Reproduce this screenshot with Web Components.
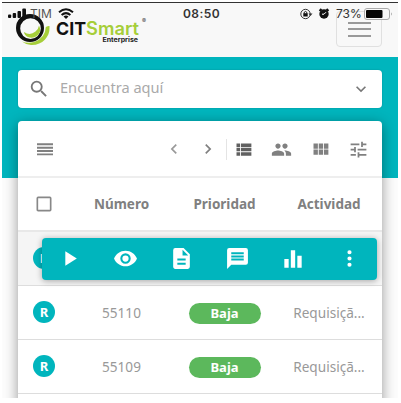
<!DOCTYPE html>
<html lang="es">
<head>
<meta charset="utf-8">
<title>CITSmart</title>
<style>
html,body{margin:0;background:#fff}
body{width:401px;height:403px;overflow:hidden;font-family:"Noto Sans","Open Sans",sans-serif}
</style>
</head>
<body>
<cit-app></cit-app>
<script>
const define = (name, css, html) => customElements.define(name, class extends HTMLElement {
  constructor() {
    super();
    const t = document.createElement('template');
    t.innerHTML = `<style>*{box-sizing:border-box}${css}</style>${typeof html === 'function' ? html(this) : html}`;
    this.attachShadow({ mode: 'open' }).append(t.content.cloneNode(true));
  }
});

const icons = {
  search: 'M15.500 14h-.79l-.28-.27A6.470 6.470 0 0 0 16 9.500 6.500 6.500 0 1 0 9.500 16c1.610 0 3.090-.59 4.230-1.570l.27.28v.79l5 4.990L20.490 19l-4.990-5zm-6 0C7.010 14 5 11.990 5 9.500S7.010 5 9.500 5 14 7.010 14 9.500 11.990 14 9.500 14z',
  expand: 'M16.590 8.590L12 13.170 7.410 8.590 6 10l6 6 6-6z',
  lines: 'M4 6.300h16v2H4zM4 9.700h16v2H4zM4 13.100h16v2H4zM4 16.500h16v1.800H4z',
  left: 'M15.410 7.410L14 6l-6 6 6 6 1.410-1.410L10.830 12z',
  right: 'M10 6L8.590 7.410 13.170 12l-4.580 4.590L10 18l6-6z',
  list: 'M4 14h4v-4H4v4zm0 5h4v-4H4v4zM4 9h4V5H4v4zm5 5h12v-4H9v4zm0 5h12v-4H9v4zM9 5v4h12V5H9z',
  group: 'M16 11c1.660 0 2.990-1.340 2.990-3S17.660 5 16 5s-3 1.340-3 3 1.340 3 3 3zm-8 0c1.660 0 2.990-1.340 2.990-3S9.660 5 8 5 5 6.340 5 8s1.340 3 3 3zm0 2c-2.330 0-7 1.170-7 3.500V19h14v-2.500c0-2.330-4.670-3.500-7-3.500zm8 0c-.29 0-.62.02-.97.05 1.160.84 1.970 1.970 1.970 3.450V19h6v-2.500c0-2.330-4.670-3.500-7-3.500z',
  grid: 'M4 11h5V5H4v6zm0 7h5v-6H4v6zm6 0h5v-6h-5v6zm6 0h5v-6h-5v6zm-6-7h5V5h-5v6zm6-6v6h5V5h-5z',
  tune: 'M3 17v2h6v-2H3zM3 5v2h10V5H3zm10 16v-2h8v-2h-8v-2h-2v6h2zM7 9v2H3v2h4v2h2V9H7zm14 4v-2H11v2h10zm-6-4h2V7h4V5h-4V3h-2v6z',
  box: 'M19 5v14H5V5h14m0-2H5a2 2 0 0 0-2 2v14c0 1.100.9 2 2 2h14a2 2 0 0 0 2-2V5a2 2 0 0 0-2-2z',
  play: 'M8 5v14l11-7z',
  eye: 'M12 4.500C7 4.500 2.730 7.610 1 12c1.730 4.390 6 7.500 11 7.500s9.270-3.110 11-7.500c-1.730-4.390-6-7.500-11-7.500zM12 17a5 5 0 1 1 0-10 5 5 0 0 1 0 10zm0-8a3 3 0 1 0 0 6 3 3 0 0 0 0-6z',
  doc: 'M14 2H6a2 2 0 0 0-1.990 2L4 20c0 1.100.89 2 1.990 2H18a2 2 0 0 0 2-2V8l-6-6zm2 16H8v-2h8v2zm0-4H8v-2h8v2zm-3-5V3.500L18.500 9H13z',
  chat: 'M20 2H4a2 2 0 0 0-2 2v18l4-4h14a2 2 0 0 0 2-2V4a2 2 0 0 0-2-2zm-2 12H6v-2h12v2zm0-3H6V9h12v2zm0-3H6V6h12v2z',
  chart: 'M4 20h4v-8H4v8zm6 0h4V4h-4v16zM16 9v11h4V9h-4z',
  more: 'M12 8a2 2 0 1 0 0-4 2 2 0 0 0 0 4zm0 2a2 2 0 1 0 0 4 2 2 0 0 0 0-4zm0 6a2 2 0 1 0 0 4 2 2 0 0 0 0-4z'
};

define('mat-icon', `:host{display:block;flex:none}svg{display:block;fill:currentColor}`, el => {
  const s = el.getAttribute('size') || 24;
  return `<svg width="${s}" height="${s}" viewBox="0 0 24 24"><path d="${icons[el.getAttribute('name')]}"/></svg>`;
});

define('status-bar', `
:host{position:absolute;z-index:2;left:0;right:0;top:1px;height:20px;display:block;color:#333;font:400 12px/20px Inter,"Liberation Sans",sans-serif}
svg{display:block;position:absolute;inset:0}
span{position:absolute;top:0;white-space:nowrap;line-height:20px}
.c{left:28px;color:#555}.t{left:181px;font-weight:600;letter-spacing:.45px}.p{left:334px}`,
`<svg width="397" height="20" viewBox="2 4 397 20">
<g fill="#111"><rect x="8" y="14.500" width="3.200" height="3.500" rx="1"/><rect x="12.700" y="13" width="3.400" height="5" rx="1"/><rect x="17.500" y="11" width="3.500" height="7" rx="1"/><rect x="22.300" y="8.500" width="3.700" height="9.500" rx="1"/></g>
<g fill="none" stroke="#111" stroke-width="2"><path d="M59 12.200Q66 6.200 73 12.200M61.600 15Q66 11.200 70.400 15"/></g><path d="M63.500 16.500Q66 14.500 68.500 16.500L66 19z" fill="#111"/>
<circle cx="305.500" cy="14" r="4.700" fill="none" stroke="#333"/><path d="M303.300 13.200h4.400v3.300h-4.400z" fill="#111"/><path d="M304.200 13.500v-1.200q1.300-1.800 2.600 0v1.200" fill="none" stroke="#111"/><path d="M308.500 13.500h4l-2 2.500z" fill="#333"/>
<circle cx="324" cy="14" r="4.700" fill="#111"/><path d="M319.500 11l2-2M328.500 11l-2-2" stroke="#111" stroke-width="2"/><path d="M324 14.200l2-2M324 14.200h-2" stroke="#fff"/>
<rect x="364.500" y="8.500" width="25" height="11" rx="2.500" fill="#f8f8f8" stroke="#aaa"/><rect x="366" y="10" width="16.500" height="8" rx="1" fill="#050505"/><path d="M391 12.300q1.500 1.700 0 3.400z" fill="#888"/></svg>
<span class="c">TIM</span><span class="t">08:50</span><span class="p">73%</span>`);

define('cit-logo', `:host{display:block;width:134px;height:36px}svg{display:block}text{font-family:Inter,"Liberation Sans",sans-serif}`,
`<svg width="134" height="36" viewBox="14 10 134 36">
<path d="M45.800 27Q50.500 25 49.500 27.500C50 37 42 45.500 31 45Q25.500 44.500 22 41.500Q28 43.800 34 42Q45.500 38 45.800 27z" fill="#a6ce39"/>
<path fill-rule="evenodd" d="M30 14A14 14 0 1 0 30 42A14 14 0 1 0 30 14zM30.500 18.300A10.300 10.300 0 1 1 30.500 38.900A10.300 10.300 0 1 1 30.500 18.300z" fill="#111"/>
<path d="M24 32Q30 36 35.500 31.500Q38.500 29 39 25.500Q42 31 37.500 35.500Q33 39 28 37Q24.500 35.500 24 32z" fill="#a6ce39"/>
<text x="56" y="34.800" font-size="18" font-weight="700" fill="#111" textLength="30" lengthAdjust="spacingAndGlyphs">CIT</text>
<text x="86" y="34.800" font-size="18" font-weight="600" fill="#a6ce39" textLength="53" lengthAdjust="spacingAndGlyphs">Smart</text>
<text x="102.500" y="42" font-size="6.800" font-weight="700" fill="#222" textLength="35.500" lengthAdjust="spacingAndGlyphs">Enterprise</text>
<text x="142" y="22.500" font-size="6" fill="#444">®</text></svg>`);

define('app-header', `
:host{position:relative;display:flex;justify-content:space-between;height:55px;background:#f8f8f8;border-top:1px solid #333;padding:7px 16px 0 12px}
.menu{width:46px;height:36px;margin-top:1px;border:1px solid #e0e0e0;border-radius:4px;display:flex;flex-direction:column;align-items:center;justify-content:center;gap:4.500px}
.menu i{width:23px;height:2px;background:#999}`,
`<cit-logo></cit-logo><div class="menu"><i></i><i></i><i></i></div><status-bar></status-bar>`);

define('search-box', `
:host{display:flex;flex:none;align-items:center;height:38px;border-radius:4px;background:#fff;color:#777;padding:0 11px 0 10px;box-shadow:0 0 2px #0003}
span{flex:1;margin:-4px 0 0 10px;color:#aaa;font-size:14.600px}`,
`<mat-icon name="search" size="22"></mat-icon><span><slot></slot></span><mat-icon name="expand" size="20"></mat-icon>`);

define('tool-bar', `
:host{display:grid;grid-template-columns:54px 85px 34px 34px 37px 39px 38px 38px;align-items:center;height:57px;border-bottom:2px solid #eee;color:#808080;padding-top:2px}
mat-icon{justify-self:center}.l{color:#999}.v{color:#606060}
.s{justify-self:stretch;position:relative;display:grid;align-items:center}
.s::before{content:"";position:absolute;left:1px;top:0;width:1px;height:21px;background:#e4e4e4}`,
`<mat-icon name="lines" size="24"></mat-icon><i></i><mat-icon class="l" name="left" size="20"></mat-icon><mat-icon name="right" size="20"></mat-icon><div class="s"><mat-icon class="v" name="list" size="21"></mat-icon></div><mat-icon name="group" size="21"></mat-icon><mat-icon name="grid" size="21"></mat-icon><mat-icon name="tune" size="21"></mat-icon>`);

define('table-row', `
:host{display:grid;grid-template-columns:52px 103px 103px 106px;align-items:center;height:54px;border-bottom:1px solid #ddd;color:#999;font-size:13.600px;text-align:center}
:host([head]){font-weight:700;color:#808080;font-size:13.500px;border-bottom:2px solid #e8e8e8}
:host([active]){background:#f5f5f5}
::slotted(*){justify-self:center}`, `<slot></slot>`);

define('type-dot', `:host{display:grid;place-items:center;width:22px;height:22px;border-radius:50%;background:#00b5bd;color:#fff;font-weight:700;font-size:13px;line-height:22px}`, `<slot></slot>`);
define('priority-pill', `:host{display:block;width:72px;height:21px;border-radius:11px;background:#5cb85c;color:#fff;font-weight:700;font-size:13px;line-height:21px;margin-top:2px}`, `<slot></slot>`);
define('action-bar', `
:host{position:absolute;left:24px;top:117px;width:335px;height:42px;background:#00b5bd;color:#fff;border-radius:4px;display:grid;grid-template-columns:repeat(6,56px);align-items:center;box-shadow:0 1px 6px #0005}
mat-icon{justify-self:center;margin-right:2px}`,
`<mat-icon name="play" size="25"></mat-icon><mat-icon name="eye" size="25"></mat-icon><mat-icon name="doc" size="25"></mat-icon><mat-icon name="chat" size="25"></mat-icon><mat-icon name="chart" size="26"></mat-icon><mat-icon name="more" size="25"></mat-icon>`);

define('ticket-card', `:host{position:relative;display:block;flex:none;background:#fff;border-radius:4px 4px 0 0;height:290px;box-shadow:0 3px 14px #0006}`,
`<tool-bar></tool-bar>
<table-row head><mat-icon name="box" size="20" style="color:#888"></mat-icon><span>Número</span><span>Prioridad</span><span>Actividad</span></table-row>
<table-row active><type-dot>R</type-dot></table-row>
<table-row><type-dot>R</type-dot><span>55110</span><priority-pill>Baja</priority-pill><span>Requisiçã...</span></table-row>
<table-row><type-dot>R</type-dot><span>55109</span><priority-pill>Baja</priority-pill><span>Requisiçã...</span></table-row>
<action-bar></action-bar>`);

define('cit-app', `
:host{display:block;width:396px;height:396px;margin:2px;overflow:hidden}
main{height:341px;padding:12.500px 16px 0;background:linear-gradient(#00b5bd 121px,#fcfcfc 121px);display:flex;flex-direction:column;gap:13px}`,
`<app-header></app-header><main><search-box>Encuentra aquí</search-box><ticket-card></ticket-card></main>`);
</script>
</body>
</html>
